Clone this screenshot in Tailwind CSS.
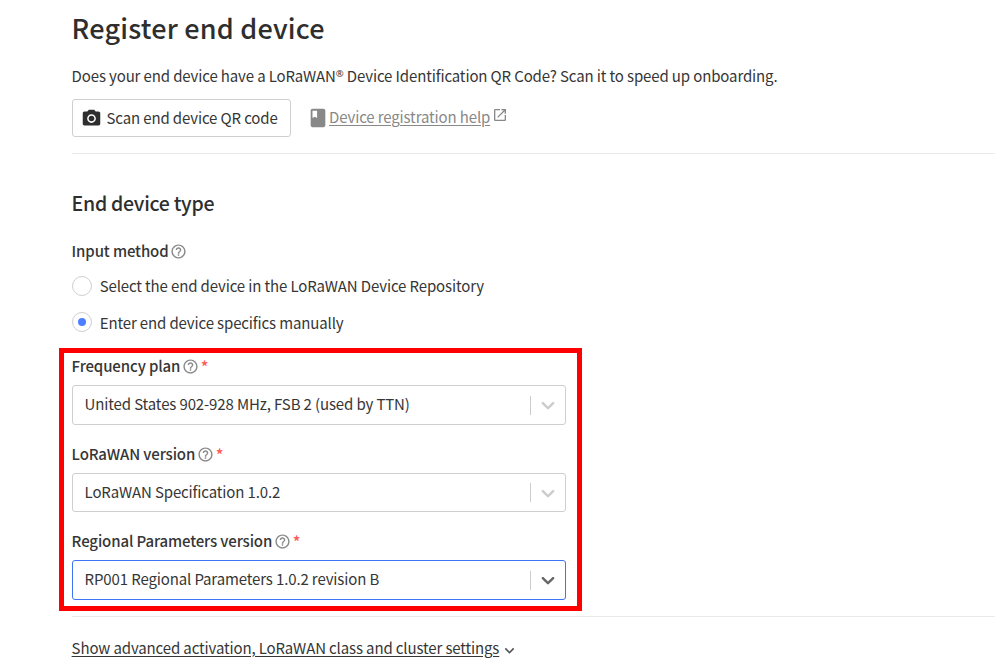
<!DOCTYPE html>
<html lang="en">
<head>
<meta charset="utf-8">
<title>Register end device</title>
<script src="https://cdn.jsdelivr.net/npm/@tailwindcss/browser@4"></script>
</head>
<body class="bg-white">
<svg class="hidden">
  <symbol id="help" viewBox="0 0 24 24"><path fill="currentColor" d="M11 18h2v-2h-2v2zm1-16C6.48 2 2 6.48 2 12s4.48 10 10 10 10-4.48 10-10S17.52 2 12 2zm0 18c-4.41 0-8-3.59-8-8s3.59-8 8-8 8 3.59 8 8-3.59 8-8 8zm0-14c-2.21 0-4 1.79-4 4h2c0-1.1.9-2 2-2s2 .9 2 2c0 2-3 1.75-3 5h2c0-2.25 3-2.5 3-5 0-2.21-1.79-4-4-4z"/></symbol>
  <symbol id="chevron" viewBox="0 0 20 20"><path fill="currentColor" d="M4.516 7.548c0.436-0.446 1.043-0.481 1.576 0l3.908 3.747 3.908-3.747c0.533-0.481 1.141-0.446 1.574 0 0.436 0.445 0.408 1.197 0 1.615-0.406 0.418-4.695 4.502-4.695 4.502-0.217 0.223-0.502 0.335-0.787 0.335s-0.57-0.112-0.789-0.335c0 0-4.287-4.084-4.695-4.502s-0.436-1.17 0-1.615z"/></symbol>
</svg>
<main class="flex h-[669px] w-[995px] flex-col overflow-hidden bg-white pl-[72px] pt-[8px] font-['Noto_Sans_CJK_SC','Noto_Sans',sans-serif] text-[15px] leading-5 tracking-[-0.13px] whitespace-nowrap text-[#363636]">
  <h1 class="-ml-[0.4px] h-[58px] text-[27px] leading-10 font-medium tracking-[0.2px] text-[#2e2e2e]"><span>Register end device</span></h1>
  <p class="-ml-[0.4px] h-[33px]"><span>Does your end device have a LoRaWAN<sup class="relative top-[-5px] align-baseline font-['Noto_Sans'] text-[9.5px] leading-none">®</sup> Device Identification QR Code? Scan it to speed up onboarding.</span></p>
  <div class="flex h-[38px] items-center">
    <button class="flex h-[38px] w-[219px] items-center rounded-[3px] border border-[#cfcfcf] pl-[8px]">
      <svg class="size-[21px] shrink-0" viewBox="0 0 24 24" fill="#2e2e2e"><circle cx="12" cy="12" r="3.2"/><path d="M9 2L7.17 4H4c-1.1 0-2 .9-2 2v12c0 1.1.9 2 2 2h16c1.1 0 2-.9 2-2V6c0-1.1-.9-2-2-2h-3.17L15 2H9zm3 15c-2.76 0-5-2.24-5-5s2.24-5 5-5 5 2.24 5 5-2.24 5-5 5z"/></svg>
      <span class="ml-[4.5px]">Scan end device QR code</span>
    </button>
    <a class="ml-[16px] flex items-center text-[#888]">
      <svg class="size-[22px] shrink-0" viewBox="0 0 24 24" fill="#888"><path d="M18 2H6c-1.1 0-2 .9-2 2v16c0 1.1.9 2 2 2h12c1.1 0 2-.9 2-2V4c0-1.1-.9-2-2-2zM6 4h5v8l-2.5-1.5L6 12V4z"/></svg>
      <span class="mb-[2px] underline underline-offset-2">Device registration help</span>
      <svg class="mb-[6px] ml-[2px] size-4 shrink-0" viewBox="0 0 24 24" fill="#888"><path d="M19 19H5V5h7V3H5c-1.11 0-2 .9-2 2v14c0 1.1.89 2 2 2h14c1.1 0 2-.9 2-2v-7h-2v7zM14 3v2h3.59l-9.83 9.83 1.41 1.41L19 6.41V10h2V3h-7z"/></svg>
    </a>
  </div>
  <hr class="mt-4 h-px border-0 bg-[#e9e9e9]">
  <h2 class="mt-[35px] -ml-[0.4px] h-[52px] text-[19.5px] leading-7 font-medium tracking-[-0.28px] text-[#2e2e2e]"><span>End device type</span></h2>
  <div class="-ml-[0.4px] flex h-5 items-center font-medium"><span>Input method</span><svg class="ml-[1.5px] size-[17px] text-[#888]"><use href="#help"/></svg></div>
  <div class="mt-[15px] flex h-5 items-center"><span class="size-5 rounded-full border border-[#cfcfcf]"></span><span class="ml-[7.7px]">Select the end device in the LoRaWAN Device Repository</span></div>
  <div class="mt-[16px] flex h-5 items-center"><span class="flex size-5 items-center justify-center rounded-full border border-[#cfcfcf]"><span class="size-2 rounded-full bg-[#4c80ff]"></span></span><span class="mt-[2px] ml-[7.7px]">Enter end device specifics manually</span></div>
  <section class="mt-4 -ml-[13px] h-[263px] w-[523px] shrink-0 border-[5px] border-[#f00] pl-2 pt-[3px]">
    <div class="-ml-[0.4px] flex h-5 items-center font-medium"><span>Frequency plan</span><svg class="ml-[1.5px] size-[17px] text-[#888]"><use href="#help"/></svg><span class="ml-[2px] text-[16px] text-[#ff5a5a]">*</span></div>
    <div class="mt-[9px] flex h-10 w-[494px] items-center rounded-[3px] border border-[#cfcfcf] pl-[11.6px] pr-[6px]"><span class="mb-[2px]">United States 902-928 MHz, FSB 2 (used by TTN)</span><span class="ml-auto h-[19px] w-px bg-[#ccc]"></span><svg class="ml-[6px] size-[22px] text-[#ccc]"><use href="#chevron"/></svg></div>
    <div class="mt-[19px] -ml-[0.4px] flex h-5 items-center font-medium"><span>LoRaWAN version</span><svg class="ml-[1.5px] size-[17px] text-[#888]"><use href="#help"/></svg><span class="ml-[2px] text-[16px] text-[#ff5a5a]">*</span></div>
    <div class="mt-[9px] flex h-[39px] w-[494px] items-center rounded-[3px] border border-[#cfcfcf] pl-[11.6px] pr-[6px]"><span class="mb-[2px]">LoRaWAN Specification 1.0.2</span><span class="ml-auto h-[19px] w-px bg-[#ccc]"></span><svg class="ml-[6px] size-[22px] text-[#ccc]"><use href="#chevron"/></svg></div>
    <div class="mt-[19px] -ml-[0.4px] flex h-5 items-center font-medium"><span>Regional Parameters version</span><svg class="ml-[1.5px] size-[17px] text-[#888]"><use href="#help"/></svg><span class="ml-[2px] text-[16px] text-[#ff5a5a]">*</span></div>
    <div class="mt-[9px] flex h-10 w-[494px] items-center rounded-[3px] border border-[#3d75f5] pl-[11.6px] pr-[6px]"><span class="mb-[2px]">RP001 Regional Parameters 1.0.2 revision B</span><span class="ml-auto h-[19px] w-px bg-[#ccc]"></span><svg class="ml-[6px] size-[22px] text-[#666]"><use href="#chevron"/></svg></div>
  </section>
  <hr class="mt-[5px] h-px shrink-0 border-0 bg-[#e9e9e9]">
  <div class="mt-[21px] -ml-[0.4px] flex h-5 items-center"><span class="underline underline-offset-2">Show advanced activation, LoRaWAN class and cluster settings</span><svg class="ml-[1px] mt-[4px] size-[19px]" viewBox="0 0 24 24" fill="#555"><path d="M7.41 8.59 12 13.17l4.59-4.58L18 10l-6 6-6-6 1.410-1.410z"/></svg></div>
</main>
</body>
</html>
